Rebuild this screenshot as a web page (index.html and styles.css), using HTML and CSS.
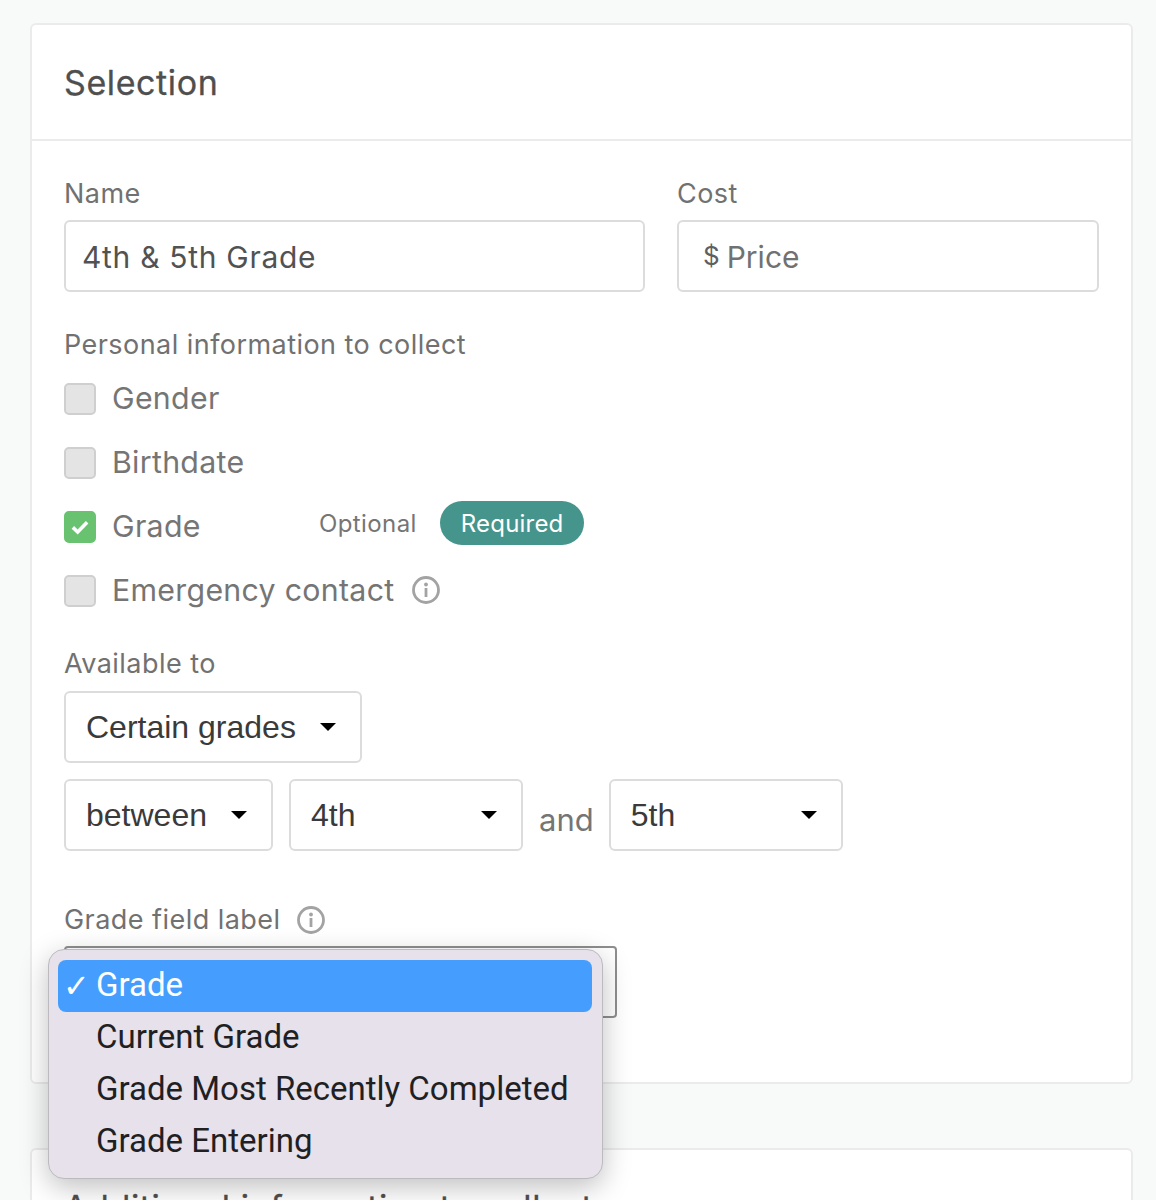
FILE: index.html
```html
<!DOCTYPE html>
<html lang="en">
<head>
    <meta charset="UTF-8">
    <meta name="viewport" content="width=device-width, initial-scale=1.0">
    <title>Selection</title>
    <link rel="stylesheet" href="styles.css">
</head>
<body>
    <section class="card">
        <header class="card-head">
            <h2>Selection</h2>
        </header>
        <div class="card-body">
            <div class="row-fields">
                <div class="field field-name">
                    <label>Name</label>
                    <div class="input input-name">4th &amp; 5th Grade</div>
                </div>
                <div class="field field-cost">
                    <label>Cost</label>
                    <div class="input input-price"><span class="dollar">$</span><span class="placeholder">Price</span></div>
                </div>
            </div>

            <div class="group">
                <label>Personal information to collect</label>
                <div class="check-row">
                    <span class="checkbox"></span><span class="check-label">Gender</span>
                </div>
                <div class="check-row">
                    <span class="checkbox"></span><span class="check-label">Birthdate</span>
                </div>
                <div class="check-row">
                    <span class="checkbox checked">
                        <svg viewBox="0 0 16 16" width="22" height="22"><path d="M2.8 8.3 L6.3 11.6 L13.2 4.6" fill="none" stroke="#fff" stroke-width="2.6"/></svg>
                    </span>
                    <span class="check-label grade-label">Grade</span>
                    <span class="toggle">Optional</span>
                    <span class="toggle active">Required</span>
                </div>
                <div class="check-row">
                    <span class="checkbox"></span><span class="check-label">Emergency contact</span>
                    <svg class="info" viewBox="0 0 28 28" width="28" height="28"><circle cx="14" cy="14" r="12.5" fill="none" stroke="#a3a3a3" stroke-width="2.8"/><circle cx="14" cy="8.5" r="1.9" fill="#a3a3a3"/><rect x="12.6" y="12" width="2.8" height="9" fill="#a3a3a3"/></svg>
                </div>
            </div>

            <div class="group group-avail">
                <label>Available to</label>
                <div class="select-row">
                    <div class="select select-certain">Certain grades<span class="caret"></span></div>
                </div>
                <div class="select-row">
                    <div class="select select-between">between<span class="caret"></span></div>
                    <div class="select select-grade">4th<span class="caret"></span></div>
                    <span class="and">and</span>
                    <div class="select select-grade">5th<span class="caret"></span></div>
                </div>
            </div>

            <div class="group group-label">
                <label class="label-info">Grade field label
                    <svg class="info" viewBox="0 0 28 28" width="28" height="28"><circle cx="14" cy="14" r="12.5" fill="none" stroke="#a3a3a3" stroke-width="2.8"/><circle cx="14" cy="8.5" r="1.9" fill="#a3a3a3"/><rect x="12.6" y="12" width="2.8" height="9" fill="#a3a3a3"/></svg>
                </label>
                <div class="native-select">
                    <ul class="menu">
                        <li class="selected"><span class="tick">✓</span>Grade</li>
                        <li>Current Grade</li>
                        <li>Grade Most Recently Completed</li>
                        <li>Grade Entering</li>
                    </ul>
                </div>
            </div>
        </div>
    </section>

    <section class="card card-next">
        <div class="card-next-title">Additional information to collect</div>
    </section>
</body>
</html>
```

FILE: styles.css
```css
html, body {
    height: 1200px;
    overflow: hidden;
}
body {
    font-family: Inter, "Noto Sans", sans-serif;
    margin: 0;
    padding: 23px 23px 0 30px;
    background-color: #f8faf9;
    color: #717171;
}
.card {
    background: #ffffff;
    border: 2px solid #ebebeb;
    border-radius: 6px;
    box-sizing: border-box;
    height: 1061px;
}
.card-head {
    height: 116px;
    box-sizing: border-box;
    border-bottom: 2px solid #ebebeb;
    padding: 0 32px;
    display: flex;
    align-items: center;
}
.card-head h2 {
    margin: 0;
    font-size: 34px;
    letter-spacing: 0.6px;
    font-weight: 400;
    color: #4f4f4f;
    -webkit-text-stroke: 0.3px #4f4f4f;
}
.card-body {
    padding: 37px 32px 0;
}
label {
    display: block;
    font-size: 27px;
    letter-spacing: 0.45px;
    line-height: 32px;
    color: #717171;
}
.row-fields {
    display: flex;
    gap: 32px;
}
.field-name {
    width: 581px;
}
.field-cost {
    width: 422px;
}
.input {
    margin-top: 10px;
    height: 72px;
    box-sizing: border-box;
    border: 2px solid #dcdcdc;
    border-radius: 6px;
    padding: 2px 16px 0;
    display: flex;
    align-items: center;
    font-size: 30px;
    color: #525252;
}
.input-name {
    letter-spacing: 0.7px;
}
.input-price {
    padding-left: 24px;
}
.dollar {
    font-size: 26px;
    margin: -3px 7px 0 0;
    color: #5f5f5f;
}
.placeholder {
    color: #717171;
}
.group {
    margin-top: 37px;
}
.check-row {
    height: 64px;
    display: flex;
    align-items: center;
}
.group label + .check-row {
    margin-top: 5px;
}
.checkbox {
    width: 32px;
    height: 32px;
    box-sizing: border-box;
    background: #e4e4e4;
    border: 2px solid #cfcfcf;
    border-radius: 5px;
    margin: 2px 16px 0 0;
    display: flex;
    align-items: center;
    justify-content: center;
}
.checkbox.checked {
    background: #68c270;
    border-color: #68c270;
}
.check-label {
    font-size: 30.3px;
    letter-spacing: 0.3px;
    margin-top: -1px;
    color: #757575;
}
.grade-label {
    width: 196px;
}
.toggle {
    font-size: 24px;
    letter-spacing: 0.4px;
    line-height: 46px;
    height: 44px;
    border-radius: 22px;
    padding: 0 11px;
    margin: -6px 0 0 0;
    color: #757575;
}
.toggle.active {
    margin-left: 12px;
    padding: 0 20px 0 21px;
    letter-spacing: 0.2px;
    background: #45958c;
    color: #ffffff;
}
.info {
    margin-left: 17px;
}
.group-avail {
    margin-top: 26px;
}
.select-row {
    display: flex;
    align-items: flex-end;
    gap: 16px;
    margin-top: 16px;
}
.group-avail label + .select-row {
    margin-top: 11px;
}
.select {
    height: 72px;
    box-sizing: border-box;
    border: 2px solid #dcdcdc;
    border-radius: 6px;
    background: #ffffff;
    padding: 0 24px 0 20px;
    display: flex;
    align-items: center;
    justify-content: space-between;
    font-family: "Liberation Sans", Arial, sans-serif;
    font-size: 32px;
    color: #3a3a3a;
}
.select-certain {
    width: 298px;
}
.select-between {
    width: 209px;
}
.select-grade {
    width: 234px;
}
.caret {
    width: 0;
    height: 0;
    border-left: 8px solid transparent;
    border-right: 8px solid transparent;
    border-top: 8px solid #000000;
}
.and {
    font-size: 31px;
    line-height: 72px;
    color: #757575;
    margin: 0 -1px -5px 0;
}
.group-label {
    margin-top: 53px;
}
.label-info {
    display: flex;
    align-items: center;
}
.native-select {
    position: relative;
    margin-top: 10px;
    width: 553px;
    height: 72px;
    box-sizing: border-box;
    border: 2px solid #8e8e8e;
    border-radius: 4px;
    background: #ffffff;
}
.menu {
    position: absolute;
    left: -18px;
    top: 1px;
    width: 555px;
    height: 230px;
    box-sizing: border-box;
    margin: 0;
    padding: 10px 10px 10px 9px;
    list-style: none;
    background: #e6e1ea;
    border: 1px solid #bdbabf;
    border-radius: 16px;
    box-shadow: 0 8px 28px rgba(0, 0, 0, 0.25);
    font-family: Roboto, sans-serif;
    font-size: 33px;
    color: #1f1f24;
    z-index: 2;
}
.menu li {
    height: 52px;
    line-height: 50px;
    padding-left: 38px;
    border-radius: 8px;
    position: relative;
}
.menu li.selected {
    background: #459efe;
    color: #ffffff;
}
.tick {
    position: absolute;
    left: 5px;
    top: 1px;
    font-family: "DejaVu Sans", sans-serif;
    font-size: 32px;
}
.card-next {
    margin-top: 64px;
    padding: 38px 32px 0;
    height: 120px;
}
.card-next-title {
    font-size: 34px;
    letter-spacing: 0.6px;
    line-height: 40px;
    color: #4f4f4f;
    -webkit-text-stroke: 0.3px #4f4f4f;
}
```
